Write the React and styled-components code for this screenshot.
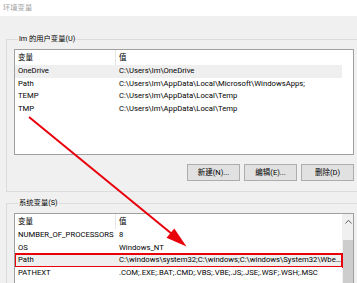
import React from 'react';
import styled, { createGlobalStyle } from 'styled-components';

const GlobalStyle = createGlobalStyle`
  html, body { margin: 0; padding: 0; background: #f0f0f0; overflow: hidden; }
  body { font-family: Roboto, "Noto Sans CJK SC", sans-serif; }
`;

const Window = styled.div`
  position: relative;
  width: 357px;
  height: 283px;
  overflow: hidden;
  background: #f0f0f0;
  font-family: Roboto, "Noto Sans CJK SC", sans-serif;
  font-size: 7.7px;
  color: #000;
`;

const TitleBar = styled.div`
  height: 16px;
  line-height: 16px;
  padding-left: 3px;
  background: #fff;
  color: #a0a0a0;
  font-size: 7.3px;
`;

const Content = styled.div`
  width: 355px;
  margin-left: 6px;
`;

const Group = styled.div`
  box-sizing: border-box;
  width: 355px;
  margin-top: ${(p) => p.$top}px;
  border: 1px solid #dcdcdc;
  padding: 0 6px ${(p) => p.$bottom}px 7px;
`;

const GroupLabel = styled.div`
  width: fit-content;
  height: 12px;
  line-height: 12px;
  margin: -7px 0 0 4px;
  padding: 0 1px;
  background: #f0f0f0;
  color: #000;
  font-size: 7.3px;
`;

const List = styled.div`
  box-sizing: border-box;
  display: flex;
  width: 340px;
  height: ${(p) => p.$height}px;
  margin-top: 4px;
  border: 1px solid #a0a0a0;
  background: #fff;
  overflow: hidden;
`;

const ListMain = styled.div`
  width: 327px;
  display: flex;
  flex-direction: column;
`;

const Header = styled.div`
  display: grid;
  grid-template-columns: 100px 1fr;
  height: 15px;
  line-height: 15px;
  font-size: 7.5px;
`;

const HeaderCell = styled.div`
  padding-left: 3px;
  border-left: ${(p) => (p.$sep ? '1px solid #e5e5e5' : 'none')};
  white-space: nowrap;
`;

const Row = styled.div`
  display: grid;
  grid-template-columns: 100px 1fr;
  height: 12.5px;
  line-height: 12.5px;
  background: ${(p) => (p.$hl ? '#efefef' : '#fff')};
  outline: ${(p) => (p.$marked ? '2px solid #e8000b' : 'none')};
  outline-offset: -1px;
  position: relative;
`;

const Cell = styled.div`
  padding-left: ${(p) => p.$pad}px;
  white-space: nowrap;
  overflow: ${(p) => (p.$clip ? 'hidden' : 'visible')};
  text-overflow: ellipsis;
  min-width: 0;
`;

const Scrollbar = styled.div`
  width: 11px;
  display: flex;
  flex-direction: column;
  background: #f0f0f0;
  padding-left: 1px;
  box-sizing: border-box;
`;

const ScrollArrow = styled.div`
  height: 15px;
  display: flex;
  align-items: center;
  justify-content: center;
`;

const ScrollThumb = styled.div`
  margin-top: 11px;
  height: 60px;
  background: #cdcdcd;
`;

const ButtonRow = styled.div`
  display: flex;
  justify-content: flex-end;
  gap: 4px;
  margin-top: 9px;
`;

const Button = styled.button`
  box-sizing: border-box;
  width: 53px;
  height: 17px;
  padding: 0;
  border: 1px solid #adadad;
  background: #e1e1e1;
  font-family: inherit;
  font-size: 7.5px;
  color: #000;
  line-height: 15px;
`;

const Overlay = styled.svg`
  position: absolute;
  left: 0;
  top: 0;
  pointer-events: none;
`;

const userVars = [
  ['OneDrive', 'C:\\Users\\lm\\OneDrive'],
  ['Path', 'C:\\Users\\lm\\AppData\\Local\\Microsoft\\WindowsApps;'],
  ['TEMP', 'C:\\Users\\lm\\AppData\\Local\\Temp'],
  ['TMP', 'C:\\Users\\lm\\AppData\\Local\\Temp'],
];

const sysVars = [
  ['NUMBER_OF_PROCESSORS', '8'],
  ['OS', 'Windows_NT'],
  ['Path', 'C:\\windows\\system32;C:\\windows;C:\\windows\\System32\\Wbem;C:\\windows\\System32\\WindowsPowerShell\\v1.0\\'],
  ['PATHEXT', '.COM;.EXE;.BAT;.CMD;.VBS;.VBE;.JS;.JSE;.WSF;.WSH;.MSC'],
];

function VarTable({ rows, hl, marked }) {
  return (
    <ListMain>
      <Header>
        <HeaderCell>变量</HeaderCell>
        <HeaderCell $sep>值</HeaderCell>
      </Header>
      {rows.map(([k, v], i) => (
        <Row key={k + i} $hl={i === hl} $marked={i === marked}>
          <Cell $pad={3}>{k}</Cell>
          <Cell $pad={4} $clip>{v}</Cell>
        </Row>
      ))}
    </ListMain>
  );
}

export default function App() {
  return (
    <Window>
      <GlobalStyle />
      <TitleBar>环境变量</TitleBar>
      <Content>
        <Group $top={23} $bottom={10}>
          <GroupLabel>lm 的用户变量(U)</GroupLabel>
          <List $height={106}>
            <VarTable rows={userVars} hl={0} marked={-1} />
          </List>
          <ButtonRow>
            <Button>新建(N)...</Button>
            <Button>编辑(E)...</Button>
            <Button>删除(D)</Button>
          </ButtonRow>
        </Group>
        <Group $top={11} $bottom={10}>
          <GroupLabel>系统变量(S)</GroupLabel>
          <List $height={110}>
            <VarTable rows={sysVars} hl={2} marked={2} />
            <Scrollbar>
              <ScrollArrow>
                <svg width="7" height="5" viewBox="0 0 7 5">
                  <polyline points="0.5,4.5 3.5,1.2 6.5,4.5" fill="none" stroke="#606060" strokeWidth="1" />
                </svg>
              </ScrollArrow>
              <ScrollThumb />
            </Scrollbar>
          </List>
        </Group>
      </Content>
      <Overlay width="357" height="283" viewBox="0 0 357 283">
        <line x1="29" y1="117" x2="172" y2="234" stroke="#e8000b" strokeWidth="2" />
        <polygon points="186.5,246.5 166.5,237.8 174.3,228.6" fill="#e8000b" />
      </Overlay>
    </Window>
  );
}
